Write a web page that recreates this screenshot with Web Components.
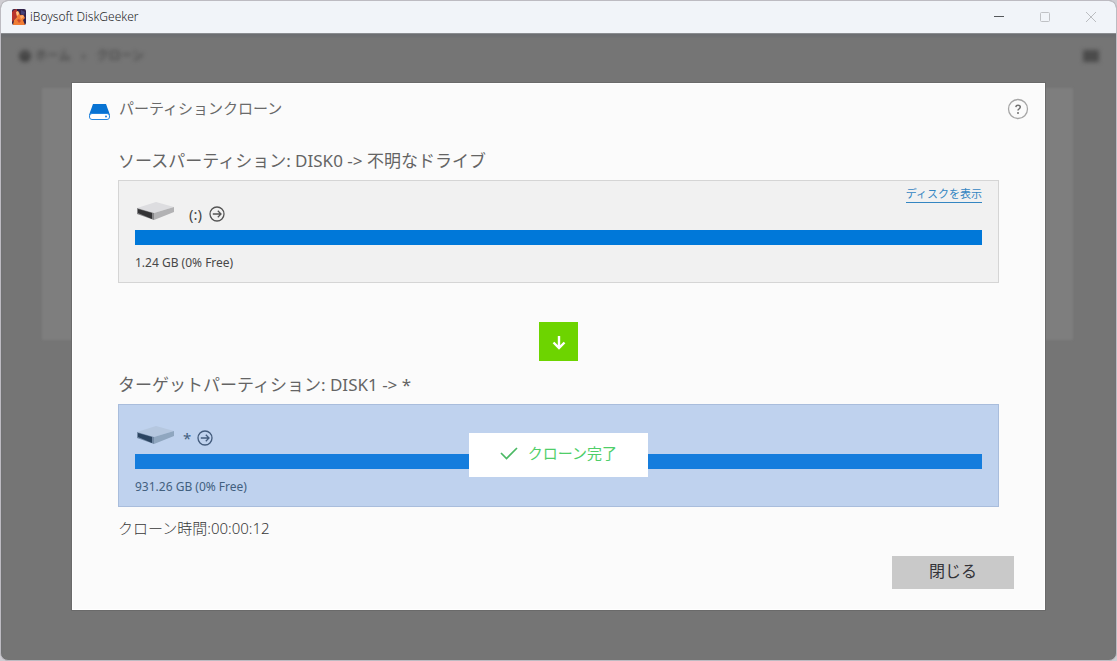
<!DOCTYPE html>
<html lang="ja">
<head>
<meta charset="utf-8">
<title>iBoysoft DiskGeeker</title>
<style>
  html, body { height: 100%; margin: 0; }
  body { background: #cfcdd3; font-family: "Noto Sans", "Noto Sans CJK JP", sans-serif; color: #555; }
</style>
</head>
<body>
<app-window>
  <title-bar slot="title">iBoysoft DiskGeeker</title-bar>
  <page-backdrop slot="page"></page-backdrop>
  <clone-dialog slot="dialog" heading="パーティションクローン">
    <partition-panel kind="source" name="(:)" size="1.24 GB (0% Free)">
      <span slot="heading">ソースパーティション: DISK0 -&gt; 不明なドライブ</span>
      <disk-link slot="action">ディスクを表示</disk-link>
    </partition-panel>
    <down-arrow></down-arrow>
    <partition-panel kind="target" name="*" size="931.26 GB (0% Free)">
      <span slot="heading">ターゲットパーティション: DISK1 -&gt; *</span>
      <done-badge slot="status">クローン完了</done-badge>
    </partition-panel>
    <span slot="time">クローン時間:00:00:12</span>
    <close-button slot="actions">閉じる</close-button>
  </clone-dialog>
</app-window>

<script>
const define = (name, render) => customElements.define(name, class extends HTMLElement {
  connectedCallback() {
    if (!this.shadowRoot) this.attachShadow({ mode: 'open' }).innerHTML = render(this);
  }
});

define('app-window', () => `
  <style>
    :host { display: grid; grid-template-rows: 32px 1fr; min-height: 100%; box-sizing: border-box;
      border: 1px solid #bdbbc2; border-radius: 8px; overflow: hidden; background: #757575; }
    .content { display: grid; border-top: 1px solid #8a8c90; box-shadow: inset 0 3px 3px #6c6e72; }
    ::slotted([slot=page]), ::slotted([slot=dialog]) { grid-area: 1 / 1; }
    ::slotted([slot=dialog]) { z-index: 1; }
  </style>
  <slot name="title"></slot>
  <main class="content"><slot name="page"></slot><slot name="dialog"></slot></main>`);

define('title-bar', () => `
  <style>
    :host { display: flex; align-items: center; background: #f1f4f9; color: #1c1c1e; font-size: 12px; line-height: 16px; padding: 0 2px 0 11px; }
    .logo { margin-right: 4px; }
    h1 { font: inherit; font-weight: 300; margin: 0; flex: 1; }
    button { width: 46px; height: 32px; border: 0; padding: 0; background: none; display: grid; place-items: center; }
    svg { display: block; }
  </style>
  <svg class="logo" width="14" height="16" viewBox="0 0 14 16" aria-hidden="true">
    <rect width="14" height="16" rx="2" fill="#30214a"/>
    <path d="M0 3Q2 0 5 0L5 8L0 13Z" fill="#b8352d"/>
    <path d="M4 4Q5 1 7 3L8 6Q11 5 12 7L13 9L11 11L13 16H1L2 11L5 8Z" fill="#f17d35"/>
    <path d="M4 3L6 2L7 5L5 7Z" fill="#ffc58b"/>
    <path d="M8 7L11 6L12 8L9 10Z" fill="#ffac69"/>
    <path d="M9 1L13 3L12 6L9 5Z" fill="#45427b"/>
    <path d="M5 11L7 10L9 12L7 14Z" fill="#d04b2f"/>
  </svg>
  <h1><slot></slot></h1>
  <button aria-label="最小化"><svg width="12" height="12"><path d="M1 5.5H11" stroke="#55575b"/></svg></button>
  <button aria-label="最大化"><svg width="12" height="12"><rect x="1.5" y="1.5" width="9" height="9" rx="1" fill="none" stroke="#bfc1c5"/></svg></button>
  <button aria-label="閉じる"><svg width="12" height="12"><path d="M1 1L11 11M11 1L1 11" stroke="#bbbdc1"/></svg></button>`);

define('page-backdrop', () => `
  <style>
    :host { display: flex; flex-direction: column; padding: 11px 17px 0; color: #383838; font-size: 12px; line-height: 22px; }
    header { display: flex; justify-content: space-between; align-items: center; filter: blur(2px); }
    nav { display: flex; align-items: center; gap: 3px; }
    .sep { margin: 0 8px; }
    .card { margin: 21px 26px 0 24px; height: 252px; background: #7e7e7e; filter: blur(1px); }
  </style>
  <header>
    <nav>
      <svg width="14" height="14" aria-hidden="true"><circle cx="7" cy="7" r="6" fill="#424242"/><path d="M3 7L7 4L11 7" stroke="#707070" fill="none"/></svg>
      <span>ホーム</span><span class="sep">›</span><span>クローン</span>
    </nav>
    <svg width="16" height="12" aria-hidden="true"><rect width="16" height="12" rx="1" fill="#4b4b4b"/></svg>
  </header>
  <div class="card"></div>`);

define('clone-dialog', el => `
  <style>
    :host { display: flex; flex-direction: column; align-self: start; margin: 49px 71px 50px; box-sizing: border-box;
      background: #fbfbfb; border: 1px solid #fff; outline: 1px solid #6a6a6a; }
    header { display: flex; align-items: center; height: 50px; padding: 0 15px; }
    header > svg { margin-top: 5px; }
    h2 { flex: 1; margin: 0 0 2px 8px; font-size: 15px; line-height: 20px; font-weight: 400; color: #6a6a6a; }
    .help { width: 22px; height: 22px; padding: 0; border: 0; background: none; }
    svg { display: block; }
    .body { display: flex; flex-direction: column; padding: 14px 45px 0; }
    .time { font-size: 15px; line-height: 22px; font-weight: 300; color: #383838; margin-top: 10px; }
    footer { display: flex; justify-content: flex-end; padding: 17px 30px 20px; }
  </style>
  <header>
    <svg width="23" height="24" viewBox="0 0 23 24" aria-hidden="true">
      <path d="M5 4H18L22 15H1Z" fill="#0873d3"/>
      <rect x="1.5" y="13.5" width="20" height="6" rx="2.5" fill="#fff" stroke="#2485de"/>
      <circle cx="18" cy="16.5" r="1" fill="#2485de"/>
    </svg>
    <h2>${el.getAttribute('heading')}</h2>
    <button class="help" aria-label="ヘルプ"><svg width="22" height="22" viewBox="0 0 22 22">
      <circle cx="11" cy="11" r="9.5" fill="none" stroke="#a6a6a6" stroke-width="1.3"/>
      <path d="M8.8 9.1Q9 7.3 11 7.3Q13.3 7.3 13.3 9.1Q13.3 10.1 12.1 10.8Q11 11.4 11 12.6" fill="none" stroke="#707070" stroke-width="1.5"/>
      <circle cx="11" cy="14.9" r="1" fill="#707070"/>
    </svg></button>
  </header>
  <div class="body"><slot></slot><div class="time"><slot name="time"></slot></div></div>
  <footer><slot name="actions"></slot></footer>`);

define('partition-panel', el => {
  const target = el.getAttribute('kind') === 'target';
  return `
  <style>
    :host { display: block; }
    h3 { margin: 0 0 6px; font-size: 17px; line-height: 26px; font-weight: 400; color: #646464; }
    .panel { position: relative; box-sizing: border-box; height: 103px; padding: 0 16px; border: 1px solid #d5d5d5; background: #f1f1f1; color: #484848; }
    .panel.target { background: #bfd2ee; border-color: #a9bddc; color: #42607f; }
    .top { display: grid; grid-template-columns: 1fr auto; height: 49px; }
    .drive { display: flex; align-items: center; padding-top: 16px; font-size: 15px; line-height: 20px; }
    .disk { margin-bottom: 6px; }
    .name { margin: 0 6px 0 14px; }
    .target .name { margin: 0 5px 0 8px; }
    svg { display: block; }
    .bar { display: block; width: 100%; height: 15px; border: 0; appearance: none; background: #0078d9; }
    .bar::-webkit-progress-bar { background: #0078d9; }
    .bar::-webkit-progress-value { background: #0078d9; }
    .target .bar, .target .bar::-webkit-progress-bar, .target .bar::-webkit-progress-value { background: #157ddd; }
    p { margin: 9px 0 0; font-size: 12px; line-height: 18px; }
    .status { position: absolute; inset: 0; display: grid; place-items: center; padding-bottom: 2px; pointer-events: none; }
  </style>
  <h3><slot name="heading"></slot></h3>
  <section class="panel ${target ? 'target' : ''}">
    <div class="top">
      <div class="drive">
        <svg class="disk" width="40" height="26" viewBox="0 0 40 26" aria-hidden="true">
          <path d="M2 10L21 4L39 9L19 15Z" fill="${target ? '#b5c7df' : '#dddde0'}"/>
          <path d="M19 15L39 9V14L19 22Z" fill="${target ? '#8fa6bf' : '#b2b2b4'}"/>
          <path d="M2 10L19 15V22L2 16Z" fill="${target ? '#7289a5' : '#858587'}"/>
          <path d="M3 11L17 15V21L3 15Z" fill="${target ? '#2b4460' : '#343436'}"/>
        </svg>
        <span class="name">${el.getAttribute('name')}</span>
        <svg width="18" height="18" viewBox="0 0 18 18" aria-hidden="true">
          <g fill="none" stroke="${target ? '#435b7c' : '#555'}" stroke-width="1.3"><circle cx="9" cy="9" r="7"/><path d="M4.8 9H13M9.8 5.8L13 9L9.8 12.2"/></g>
        </svg>
      </div>
      <slot name="action"></slot>
    </div>
    <progress class="bar" value="1" max="1" aria-label="使用量"></progress>
    <p>${el.getAttribute('size')}</p>
    <div class="status"><slot name="status"></slot></div>
  </section>`;
});

define('disk-link', () => `
  <style>
    :host { display: block; padding-top: 5px; font-size: 11px; line-height: 16px; position: relative; z-index: 1; }
    a { display: block; color: #3486c2; text-decoration: none; border-bottom: 1px solid #3486c2; }
  </style>
  <a href="#disk"><slot></slot></a>`);

define('down-arrow', () => `
  <style>
    :host { display: grid; place-items: center; align-self: center; width: 39px; height: 39px; margin: 39px 0 11px; background: #6dd400; }
    svg { display: block; }
  </style>
  <svg width="16" height="18" viewBox="0 0 16 18" aria-hidden="true">
    <path d="M8 3V15M2.5 9.5L8 15L13.5 9.5" fill="none" stroke="#fff" stroke-width="2.4"/>
  </svg>`);

define('done-badge', () => `
  <style>
    :host { display: flex; align-items: center; justify-content: center; gap: 10px; box-sizing: border-box; width: 179px; height: 44px; padding-bottom: 3px; background: #fff; color: #4fce69; font-size: 15px; line-height: 22px; }
    svg { display: block; }
  </style>
  <svg width="18" height="14" viewBox="0 0 18 14" aria-hidden="true"><path d="M1 7L6.5 12.5L17 2" fill="none" stroke="#4bb964" stroke-width="1.7"/></svg>
  <span><slot></slot></span>`);

define('close-button', () => `
  <style>
    :host { display: block; }
    button { width: 122px; height: 33px; padding: 0 0 3px; border: 0; background: #c9c9c9; color: #333338; font: inherit; font-size: 16px; line-height: 24px; }
  </style>
  <button type="button"><slot></slot></button>`);
</script>
</body>
</html>
